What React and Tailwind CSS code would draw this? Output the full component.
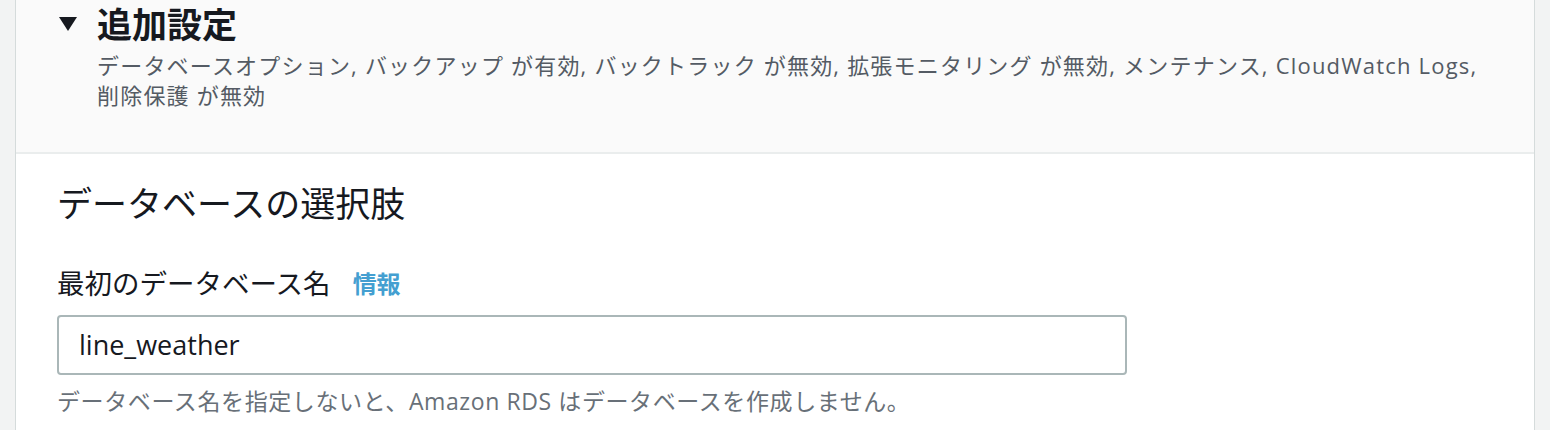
const FONT = { fontFamily: '"Open Sans", "Noto Sans CJK JP", sans-serif' };

export default function App() {
  return (
    <div className="w-[1550px] h-[430px] overflow-hidden bg-[#f2f3f3] flex px-[15px]" style={FONT}>
      <div className="flex-1 bg-white border-x border-[#d5dbdb] flex flex-col">
        {/* expandable header */}
        <div className="bg-[#fafafa] border-b-2 border-[#eaeded] h-[154px] pl-[42px] pt-[3px]">
          <div className="flex items-center h-[42px]">
            <svg width="20" height="16" viewBox="0 0 20 16" className="mr-[19px]">
              <path d="M1 1 H19 L10 15 Z" fill="#16191f" />
            </svg>
            <span className="text-[35px] font-bold text-[#16191f] leading-none">追加設定</span>
          </div>
          <div className="pl-[39px] mt-[5px] text-[22px] leading-[30px] tracking-[1.2px] text-[#545b64]">
            <div>データベースオプション, バックアップ が有効, バックトラック が無効, 拡張モニタリング が無効, メンテナンス, CloudWatch Logs,</div>
            <div>削除保護 が無効</div>
          </div>
        </div>

        {/* body */}
        <div className="pl-[41px] pt-[28px]">
          <h2 className="text-[35px] leading-[44px] text-[#16191f]">データベースの選択肢</h2>
          <div className="mt-[40px] flex items-center gap-[22px]">
            <span className="text-[27.5px] leading-[36px] text-[#16191f]">最初のデータベース名</span>
            <a className="text-[24px] font-bold text-[#449fd1] leading-[36px]">情報</a>
          </div>
          <div className="mt-[13px] w-[1070px] h-[60px] border-2 border-[#aab7b8] rounded-[4px] bg-white flex items-center px-[20px]">
            <span className="text-[27px] text-[#16191f]">line_weather</span>
          </div>
          <p className="mt-[10px] text-[23px] leading-[32px] tracking-[0.6px] text-[#687078]">
            データベース名を指定しないと、Amazon RDS はデータベースを作成しません。
          </p>
        </div>
      </div>
    </div>
  );
}
